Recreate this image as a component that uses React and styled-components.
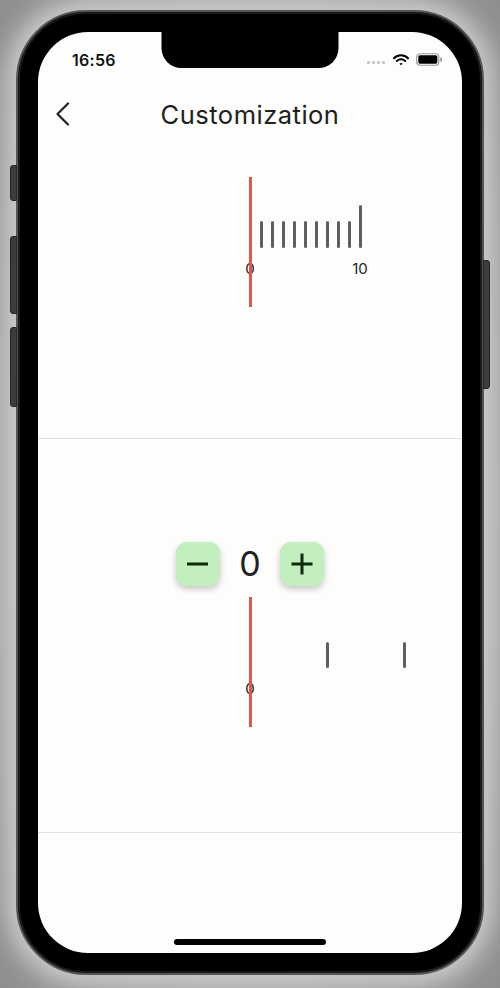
import React from "react";
import styled, { createGlobalStyle } from "styled-components";

const Global = createGlobalStyle`
  html, body { margin: 0; padding: 0; }
  body {
    background: radial-gradient(ellipse at 50% 50%, #c4c4c4 0%, #b4b4b4 55%, #8e8e8e 100%);
    font-family: Inter, "Noto Sans", sans-serif;
    width: 500px;
    height: 988px;
    overflow: hidden;
  }
`;

const Stage = styled.div`
  width: 500px;
  height: 988px;
  padding: 10px 16px 13px;
  box-sizing: border-box;
`;

const Phone = styled.div`
  position: relative;
  width: 468px;
  height: 965px;
  box-sizing: border-box;
  background: #000;
  border: 2px solid #555;
  border-radius: 70px;
  padding: 20px;
  box-shadow: 0 0 22px 10px rgba(210, 210, 210, 0.85), inset 0 0 0 2px #1a1a1a;
`;

const SideButton = styled.div`
  position: absolute;
  top: ${(p) => p.$top}px;
  height: ${(p) => p.$h}px;
  width: 5px;
  background: #3c3c3c;
  border: 1px solid #262626;
  ${(p) => (p.$right ? "right: -8px; border-radius: 0 3px 3px 0;" : "left: -8px; border-radius: 3px 0 0 3px;")}
`;

const Screen = styled.div`
  position: relative;
  height: 100%;
  background: #fdfdfb;
  border-radius: 50px;
  overflow: hidden;
  display: flex;
  flex-direction: column;
`;

const Notch = styled.div`
  position: absolute;
  top: 0;
  left: 50%;
  transform: translateX(-50%);
  width: 177px;
  height: 36px;
  background: #000;
  border-radius: 0 0 20px 20px;
`;

const StatusBar = styled.div`
  height: 54px;
  flex: none;
  display: flex;
  align-items: center;
  justify-content: space-between;
  padding: 0 20px 0 34px;
`;

const Time = styled.span`
  font-size: 16px;
  font-weight: 600;
  color: #111;
  letter-spacing: 0.3px;
  padding-top: 2px;
`;

const StatusIcons = styled.div`
  display: flex;
  align-items: center;
  gap: 7px;
  padding-top: 1px;
`;

const Dots = styled.div`
  display: flex;
  gap: 2px;
  margin-right: 1px;
  padding-top: 6px;
`;

const Dot = styled.span`
  width: 3px;
  height: 3px;
  border-radius: 50%;
  background: #bdbdbd;
`;

const NavBar = styled.div`
  height: 56px;
  flex: none;
  display: grid;
  grid-template-columns: 1fr auto 1fr;
  align-items: center;
  padding: 0 17px;
`;

const BackButton = styled.div`
  display: flex;
  align-items: center;
  justify-self: start;
`;

const Title = styled.h1`
  margin: 0;
  font-size: 25.5px;
  font-weight: 400;
  color: #202020;
  letter-spacing: 0.5px;
`;

const Section = styled.div`
  flex: none;
  box-sizing: border-box;
  height: ${(p) => p.$h}px;
  padding-top: ${(p) => p.$pt}px;
  border-bottom: 1px solid #e2e2e0;
  display: flex;
  flex-direction: column;
  align-items: stretch;
`;

const Ruler = styled.div`
  position: relative;
  height: 130px;
  margin-top: ${(p) => p.$mt || 0}px;
`;

const Indicator = styled.div`
  position: absolute;
  top: 0;
  bottom: 0;
  left: calc(50% - 1.5px);
  width: 3px;
  background: #e0574b;
  z-index: 2;
`;

const Track = styled.div`
  display: flex;
  padding-left: calc(50% - 1.5px);
  padding-top: 28px;
  gap: ${(p) => p.$step - 3}px;
`;

const TickCol = styled.div`
  flex: none;
  width: 3px;
  display: flex;
  flex-direction: column;
  align-items: center;
`;

const TickArea = styled.div`
  height: 43px;
  display: flex;
  align-items: flex-end;
`;

const Tick = styled.div`
  width: 3px;
  height: ${(p) => p.$h}px;
  background: #5d605d;
  border-radius: 1.5px;
`;

const TickLabel = styled.span`
  margin-top: 12px;
  height: 18px;
  line-height: 18px;
  font-size: ${(p) => p.$fs || 15}px;
  color: #222;
  white-space: nowrap;
`;

const Stepper = styled.div`
  display: flex;
  justify-content: center;
  align-items: center;
`;

const StepButton = styled.button`
  width: 44px;
  height: 44px;
  border: none;
  padding: 0;
  border-radius: 11px;
  background: #c3efbe;
  box-shadow: 0 3px 6px rgba(0, 0, 0, 0.22);
  display: flex;
  align-items: center;
  justify-content: center;
`;

const Value = styled.span`
  width: 60px;
  text-align: center;
  font-size: 34px;
  font-weight: 400;
  color: #222;
  line-height: 44px;
`;

const Footer = styled.div`
  flex: 1;
  display: flex;
  align-items: flex-end;
  justify-content: center;
  padding-bottom: 8px;
`;

const HomeIndicator = styled.div`
  width: 152px;
  height: 6px;
  border-radius: 3px;
  background: #000;
`;

function RulerView({ step, ticks, labelSize, mt }) {
  return (
    <Ruler $mt={mt}>
      <Indicator />
      <Track $step={step}>
        {ticks.map((t, i) => (
          <TickCol key={i}>
            <TickArea>
              <Tick $h={t.h} />
            </TickArea>
            <TickLabel $fs={labelSize}>{t.label || ""}</TickLabel>
          </TickCol>
        ))}
      </Track>
    </Ruler>
  );
}

const ruler1 = Array.from({ length: 11 }, (_, i) => ({
  h: i === 10 ? 43 : 27,
  label: i === 0 ? "0" : i === 10 ? "10" : "",
}));

const ruler2 = [
  { h: 26, label: "0" },
  { h: 26 },
  { h: 26 },
];

export default function App() {
  return (
    <>
      <Global />
      <Stage>
        <Phone>
          <SideButton $top={153} $h={34} />
          <SideButton $top={224} $h={76} />
          <SideButton $top={315} $h={78} />
          <SideButton $right $top={248} $h={127} />
          <Screen>
            <Notch />
            <StatusBar>
              <Time>16:56</Time>
              <StatusIcons>
                <Dots>
                  <Dot />
                  <Dot />
                  <Dot />
                  <Dot />
                </Dots>
                <svg width="16" height="12" viewBox="0 0 16 12">
                  <path d="M1 4.2 A10 10 0 0 1 15 4.2" fill="none" stroke="#000" strokeWidth="2" strokeLinecap="round" />
                  <path d="M3.8 7 A6 6 0 0 1 12.2 7" fill="none" stroke="#000" strokeWidth="2" strokeLinecap="round" />
                  <path d="M6.4 9.7 L8 11.3 L9.6 9.7 A2.3 2.3 0 0 0 6.4 9.7 Z" fill="#000" />
                </svg>
                <svg width="26" height="13" viewBox="0 0 26 13">
                  <rect x="0.75" y="0.75" width="22" height="11.5" rx="3" fill="none" stroke="#999" strokeWidth="1.2" />
                  <rect x="2.3" y="2.3" width="19" height="8.4" rx="1.6" fill="#000" />
                  <path d="M24.2 4.3 v4.4 a2 2 0 0 0 0-4.4 z" fill="#999" />
                </svg>
              </StatusIcons>
            </StatusBar>
            <NavBar>
              <BackButton>
                <svg width="16" height="24" viewBox="0 0 16 24">
                  <path d="M13 1.5 L2.5 12 L13 22.5" fill="none" stroke="#222" strokeWidth="2.2" strokeLinecap="round" strokeLinejoin="round" />
                </svg>
              </BackButton>
              <Title>Customization</Title>
              <span />
            </NavBar>
            <Section $h={297} $pt={35}>
              <RulerView step={11} ticks={ruler1} />
            </Section>
            <Section $h={394} $pt={103}>
              <Stepper>
                <StepButton aria-label="decrement">
                  <svg width="22" height="4" viewBox="0 0 22 4">
                    <rect x="0" y="0.5" width="21" height="3" fill="#0d2a0d" />
                  </svg>
                </StepButton>
                <Value>0</Value>
                <StepButton aria-label="increment">
                  <svg width="22" height="22" viewBox="0 0 22 22">
                    <rect x="0.5" y="9.5" width="21" height="3" fill="#0d2a0d" />
                    <rect x="9.5" y="0.5" width="3" height="21" fill="#0d2a0d" />
                  </svg>
                </StepButton>
              </Stepper>
              <RulerView step={77} ticks={ruler2} mt={11} />
            </Section>
            <Footer>
              <HomeIndicator />
            </Footer>
          </Screen>
        </Phone>
      </Stage>
    </>
  );
}
